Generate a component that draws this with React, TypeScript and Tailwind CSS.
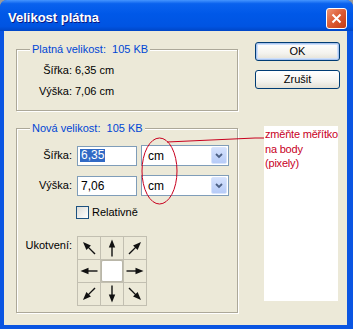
import React from 'react';

const FONT = "font-['Liberation_Sans',Arial,sans-serif]";

// rotation of each anchor arrow, center cell is empty
const anchorArrows: (number | null)[] = [-45, 0, 45, -90, null, 90, -135, 180, 135];

function Arrow({ deg }: { deg: number }) {
  return (
    <svg width="22" height="22" viewBox="0 0 22 22">
      <g transform={`rotate(${deg} 11 11)`}>
        <line x1="11" y1="19.5" x2="11" y2="8" stroke="#111" strokeWidth="1.4" />
        <polygon points="11,2.5 7.8,10.5 14.2,10.5" fill="#111" />
      </g>
    </svg>
  );
}

function XpButton({ label, isDefault }: { label: string; isDefault?: boolean }) {
  return (
    <button
      className={`flex h-[19px] w-[85px] items-center justify-center rounded-[3px] border border-[#003c74] bg-[linear-gradient(to_bottom,#ffffff_0%,#f4f3ee_60%,#e3e0d5_100%)] text-[11px] text-black ${
        isDefault ? 'shadow-[inset_0_0_0_1px_#a9c4ee,inset_0_0_0_2px_#cee0fb]' : ''
      }`}
    >
      {label}
    </button>
  );
}

function UnitSelect() {
  return (
    <div className="ml-[4px] flex h-[21px] w-[88px] items-center border border-[#7f9db9] bg-white pl-[6px] text-[12px]">
      <span className="flex-1">cm</span>
      <div className="mr-[1px] flex h-[17px] w-[16px] items-center justify-center rounded-[2px] border border-[#d8e4fc] bg-[linear-gradient(to_bottom,#d4e1fd,#b6cbf7)]">
        <svg width="8" height="6" viewBox="0 0 8 6">
          <path d="M1 1 L4 4 L7 1" stroke="#4d6185" strokeWidth="1.8" fill="none" />
        </svg>
      </div>
    </div>
  );
}

export default function App() {
  return (
    <div className={`relative h-[329px] w-[353px] bg-[#9a9a9a] ${FONT}`}>
      <div className="flex h-full flex-col rounded-t-[7px] bg-[#0a55e2]">
        {/* title bar */}
        <div className="flex h-[31px] items-start rounded-t-[7px] bg-[linear-gradient(to_bottom,#4595ff_0%,#0a62ee_12%,#0058e8_45%,#0054e2_85%,#0046c6_100%)]">
          <span className="pl-[8px] pt-[10px] text-[13px] leading-[15px] font-bold text-white [text-shadow:1px_1px_#0a1883]">
            Velikost plátna
          </span>
          <div className="mt-[8px] mr-[6px] ml-auto flex h-[21px] w-[21px] items-center justify-center rounded-[3px] border border-white bg-[linear-gradient(135deg,#ee9474_0%,#dc5a32_50%,#c43c14_100%)]">
            <svg width="11" height="11" viewBox="0 0 11 11">
              <path d="M1.5 1.5 L9.5 9.5 M9.5 1.5 L1.5 9.5" stroke="#fff" strokeWidth="2" />
            </svg>
          </div>
        </div>

        {/* client area */}
        <div className="mr-[6px] mb-[4px] ml-[4px] flex flex-1 bg-[#ece9d8] text-[11px] text-black">
          <div className="mt-[18px] ml-[12px] flex w-[222px] flex-col">
            {/* Platná velikost */}
            <div className="relative h-[62px] border border-[#aca899] pt-[10px] shadow-[inset_1px_1px_0_#fff,1px_1px_0_#fff]">
              <span className="absolute -top-[8px] left-[13px] bg-[#ece9d8] px-[2px] leading-[14px] text-[#0046d5]">
                Platná velikost:&nbsp; 105 KB
              </span>
              <div className="flex h-[21px] items-center">
                <span className="w-[55px] text-right">Šířka:</span>
                <span className="ml-[3px]">6,35 cm</span>
              </div>
              <div className="flex h-[21px] items-center">
                <span className="w-[55px] text-right">Výška:</span>
                <span className="ml-[3px]">7,06 cm</span>
              </div>
            </div>

            {/* Nová velikost */}
            <div className="relative mt-[17px] h-[185px] border border-[#aca899] pt-[16px] shadow-[inset_1px_1px_0_#fff,1px_1px_0_#fff]">
              <span className="absolute -top-[8px] left-[13px] bg-[#ece9d8] px-[2px] leading-[14px] text-[#0046d5]">
                Nová velikost:&nbsp; 105 KB
              </span>
              <div className="flex h-[21px] items-center">
                <span className="w-[55px] text-right">Šířka:</span>
                <div className="ml-[5px] flex h-[20px] w-[60px] items-center border border-[#7f9db9] bg-white pl-[2px] text-[12px]">
                  <span className="bg-[#316ac5] px-[1px] leading-[13px] text-white">6,35</span>
                </div>
                <UnitSelect />
              </div>
              <div className="mt-[9px] flex h-[21px] items-center">
                <span className="w-[55px] text-right">Výška:</span>
                <div className="ml-[5px] flex h-[20px] w-[60px] items-center border border-[#7f9db9] bg-white pl-[3px] text-[12px]">
                  7,06
                </div>
                <UnitSelect />
              </div>
              <div className="mt-[10px] ml-[59px] flex h-[13px] items-center">
                <div className="h-[13px] w-[13px] border border-[#1c5180] bg-[linear-gradient(135deg,#dcdcd7,#ffffff)]" />
                <span className="ml-[3px]">Relativně</span>
              </div>
              <div className="mt-[17px] flex items-start">
                <span className="w-[55px] pt-[1px] text-right">Ukotvení:</span>
                <div className="ml-[5px] grid grid-cols-[22px_22px_22px] gap-[1px] bg-[#c2bfb1] p-[1px]">
                  {anchorArrows.map((deg, i) =>
                    deg === null ? (
                      <div key={i} className="h-[22px] w-[22px] rounded-[2px] border border-[#b9b6a8] bg-white" />
                    ) : (
                      <div key={i} className="h-[22px] w-[22px] bg-[#ece9d8]">
                        <Arrow deg={deg} />
                      </div>
                    ),
                  )}
                </div>
              </div>
            </div>
          </div>

          {/* buttons and note */}
          <div className="mt-[11px] ml-[17px] flex w-[85px] flex-col">
            <XpButton label="OK" isDefault />
            <div className="mt-[9px]">
              <XpButton label="Zrušit" />
            </div>
            <div className="mt-[37px] ml-[9px] h-[175px] w-[74px] bg-white pt-[1px] pl-[1px] text-[11px] leading-[14.5px] whitespace-nowrap text-[#c8001e] tracking-[-0.2px]">
              změňte měřítko
              <br />
              na body
              <br />
              (pixely)
            </div>
          </div>
        </div>
      </div>

      {/* red annotation drawn over the dialog */}
      <svg className="pointer-events-none absolute inset-0" width="353" height="329">
        <ellipse cx="159.5" cy="171" rx="17.5" ry="33" fill="none" stroke="#c8001e" strokeWidth="1" />
        <polyline points="167,142 255,138 264,138" fill="none" stroke="#c8001e" strokeWidth="1" />
      </svg>
    </div>
  );
}
